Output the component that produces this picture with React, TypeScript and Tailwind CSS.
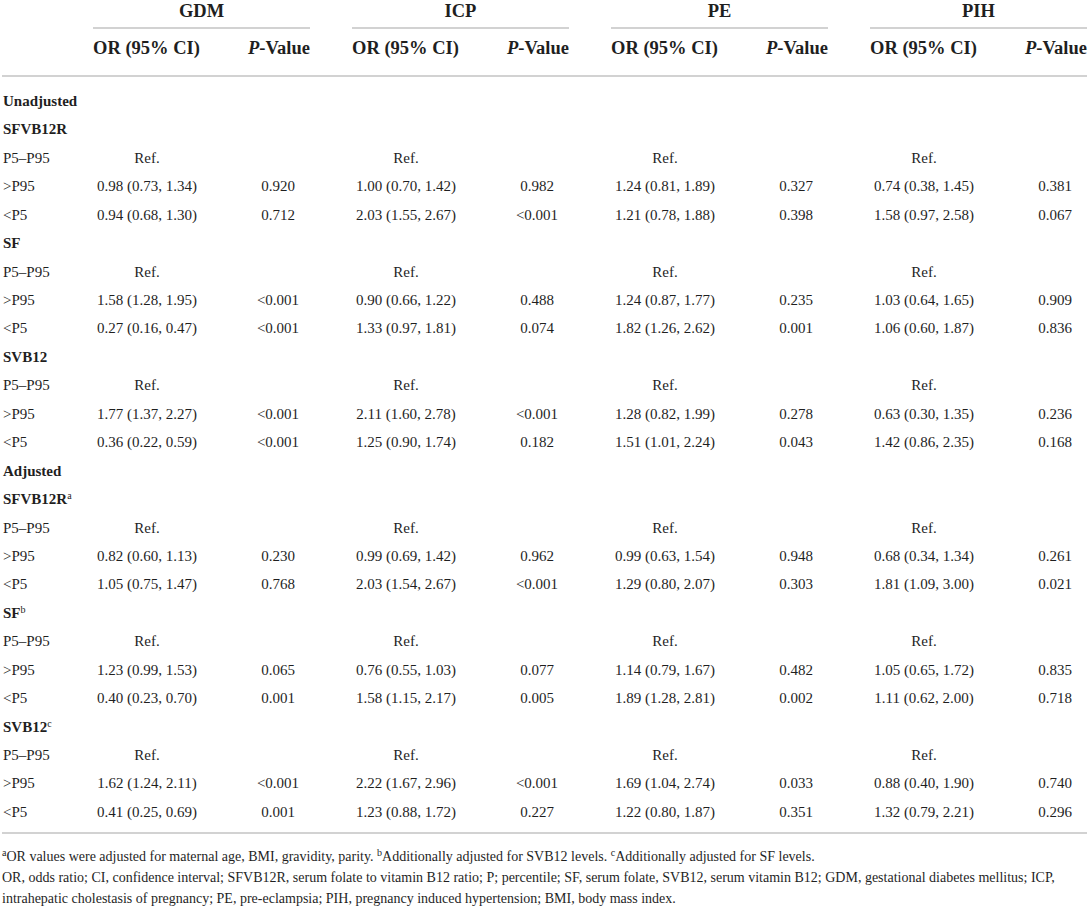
type Cell = [string, string];
type Row = { label: string; sup?: string; bold?: boolean; cells?: Cell[] };

const ref: Cell[] = [
  ["Ref.", ""],
  ["Ref.", ""],
  ["Ref.", ""],
  ["Ref.", ""],
];

const rows: Row[] = [
  { label: "Unadjusted", bold: true },
  { label: "SFVB12R", bold: true },
  { label: "P5–P95", cells: ref },
  { label: ">P95", cells: [["0.98 (0.73, 1.34)", "0.920"], ["1.00 (0.70, 1.42)", "0.982"], ["1.24 (0.81, 1.89)", "0.327"], ["0.74 (0.38, 1.45)", "0.381"]] },
  { label: "<P5", cells: [["0.94 (0.68, 1.30)", "0.712"], ["2.03 (1.55, 2.67)", "<0.001"], ["1.21 (0.78, 1.88)", "0.398"], ["1.58 (0.97, 2.58)", "0.067"]] },
  { label: "SF", bold: true },
  { label: "P5–P95", cells: ref },
  { label: ">P95", cells: [["1.58 (1.28, 1.95)", "<0.001"], ["0.90 (0.66, 1.22)", "0.488"], ["1.24 (0.87, 1.77)", "0.235"], ["1.03 (0.64, 1.65)", "0.909"]] },
  { label: "<P5", cells: [["0.27 (0.16, 0.47)", "<0.001"], ["1.33 (0.97, 1.81)", "0.074"], ["1.82 (1.26, 2.62)", "0.001"], ["1.06 (0.60, 1.87)", "0.836"]] },
  { label: "SVB12", bold: true },
  { label: "P5–P95", cells: ref },
  { label: ">P95", cells: [["1.77 (1.37, 2.27)", "<0.001"], ["2.11 (1.60, 2.78)", "<0.001"], ["1.28 (0.82, 1.99)", "0.278"], ["0.63 (0.30, 1.35)", "0.236"]] },
  { label: "<P5", cells: [["0.36 (0.22, 0.59)", "<0.001"], ["1.25 (0.90, 1.74)", "0.182"], ["1.51 (1.01, 2.24)", "0.043"], ["1.42 (0.86, 2.35)", "0.168"]] },
  { label: "Adjusted", bold: true },
  { label: "SFVB12R", sup: "a", bold: true },
  { label: "P5–P95", cells: ref },
  { label: ">P95", cells: [["0.82 (0.60, 1.13)", "0.230"], ["0.99 (0.69, 1.42)", "0.962"], ["0.99 (0.63, 1.54)", "0.948"], ["0.68 (0.34, 1.34)", "0.261"]] },
  { label: "<P5", cells: [["1.05 (0.75, 1.47)", "0.768"], ["2.03 (1.54, 2.67)", "<0.001"], ["1.29 (0.80, 2.07)", "0.303"], ["1.81 (1.09, 3.00)", "0.021"]] },
  { label: "SF", sup: "b", bold: true },
  { label: "P5–P95", cells: ref },
  { label: ">P95", cells: [["1.23 (0.99, 1.53)", "0.065"], ["0.76 (0.55, 1.03)", "0.077"], ["1.14 (0.79, 1.67)", "0.482"], ["1.05 (0.65, 1.72)", "0.835"]] },
  { label: "<P5", cells: [["0.40 (0.23, 0.70)", "0.001"], ["1.58 (1.15, 2.17)", "0.005"], ["1.89 (1.28, 2.81)", "0.002"], ["1.11 (0.62, 2.00)", "0.718"]] },
  { label: "SVB12", sup: "c", bold: true },
  { label: "P5–P95", cells: ref },
  { label: ">P95", cells: [["1.62 (1.24, 2.11)", "<0.001"], ["2.22 (1.67, 2.96)", "<0.001"], ["1.69 (1.04, 2.74)", "0.033"], ["0.88 (0.40, 1.90)", "0.740"]] },
  { label: "<P5", cells: [["0.41 (0.25, 0.69)", "0.001"], ["1.23 (0.88, 1.72)", "0.227"], ["1.22 (0.80, 1.87)", "0.351"], ["1.32 (0.79, 2.21)", "0.296"]] },
];

const groups = ["GDM", "ICP", "PE", "PIH"];

export default function App() {
  return (
    <div className="w-[1089px] h-[913px] overflow-hidden bg-white text-[#1f1f1f] font-['Liberation_Serif',serif]">
      {/* group headings */}
      <div className="flex pl-[93px] gap-x-[42px]">
        {groups.map((g) => (
          <div key={g} className="w-[217px] text-center text-[18.5px] font-bold leading-[22px] pb-[5px] border-b-2 border-[#d2d2d2]">
            {g}
          </div>
        ))}
      </div>
      {/* sub headings */}
      <div className="mx-[2px] flex pl-[91px] gap-x-[42px] pt-[8px] pb-[16px] border-b-2 border-[#d2d2d2] text-[18.5px] font-bold leading-[22px]">
        {groups.map((g) => (
          <div key={g} className="w-[217px] flex justify-between">
            <span>OR (95% CI)</span>
            <span>
              <i>P</i>-Value
            </span>
          </div>
        ))}
      </div>
      {/* body */}
      <div className="pt-[10px] text-[15px]">
        {rows.map((r, i) => (
          <div key={i} className="flex h-[28.44px] items-center">
            <div className={`w-[93px] pl-[3px] whitespace-nowrap ${r.bold ? "font-bold" : ""}`}>
              {r.label}
              {r.sup && <sup className="text-[10px] font-normal">{r.sup}</sup>}
            </div>
            {r.cells && (
              <div className="flex gap-x-[42px]">
                {r.cells.map((c, j) => (
                  <div key={j} className="w-[217px] flex justify-between">
                    <span className="w-[108px] text-center">{c[0]}</span>
                    <span className="w-[64px] text-center">{c[1]}</span>
                  </div>
                ))}
              </div>
            )}
          </div>
        ))}
      </div>
      {/* footnotes */}
      <div className="mx-[2px] mt-[6px] border-t-2 border-[#d2d2d2] pt-[12px] text-[14px] leading-[21px]">
        <p>
          <sup className="text-[10px]">a</sup>OR values were adjusted for maternal age, BMI, gravidity, parity.{" "}
          <sup className="text-[10px]">b</sup>Additionally adjusted for SVB12 levels.{" "}
          <sup className="text-[10px]">c</sup>Additionally adjusted for SF levels.
        </p>
        <p>
          OR, odds ratio; CI, confidence interval; SFVB12R, serum folate to vitamin B12 ratio; P; percentile; SF, serum folate, SVB12, serum vitamin B12; GDM, gestational diabetes mellitus; ICP, intrahepatic cholestasis of pregnancy; PE, pre-eclampsia; PIH, pregnancy induced hypertension; BMI, body mass index.
        </p>
      </div>
    </div>
  );
}
